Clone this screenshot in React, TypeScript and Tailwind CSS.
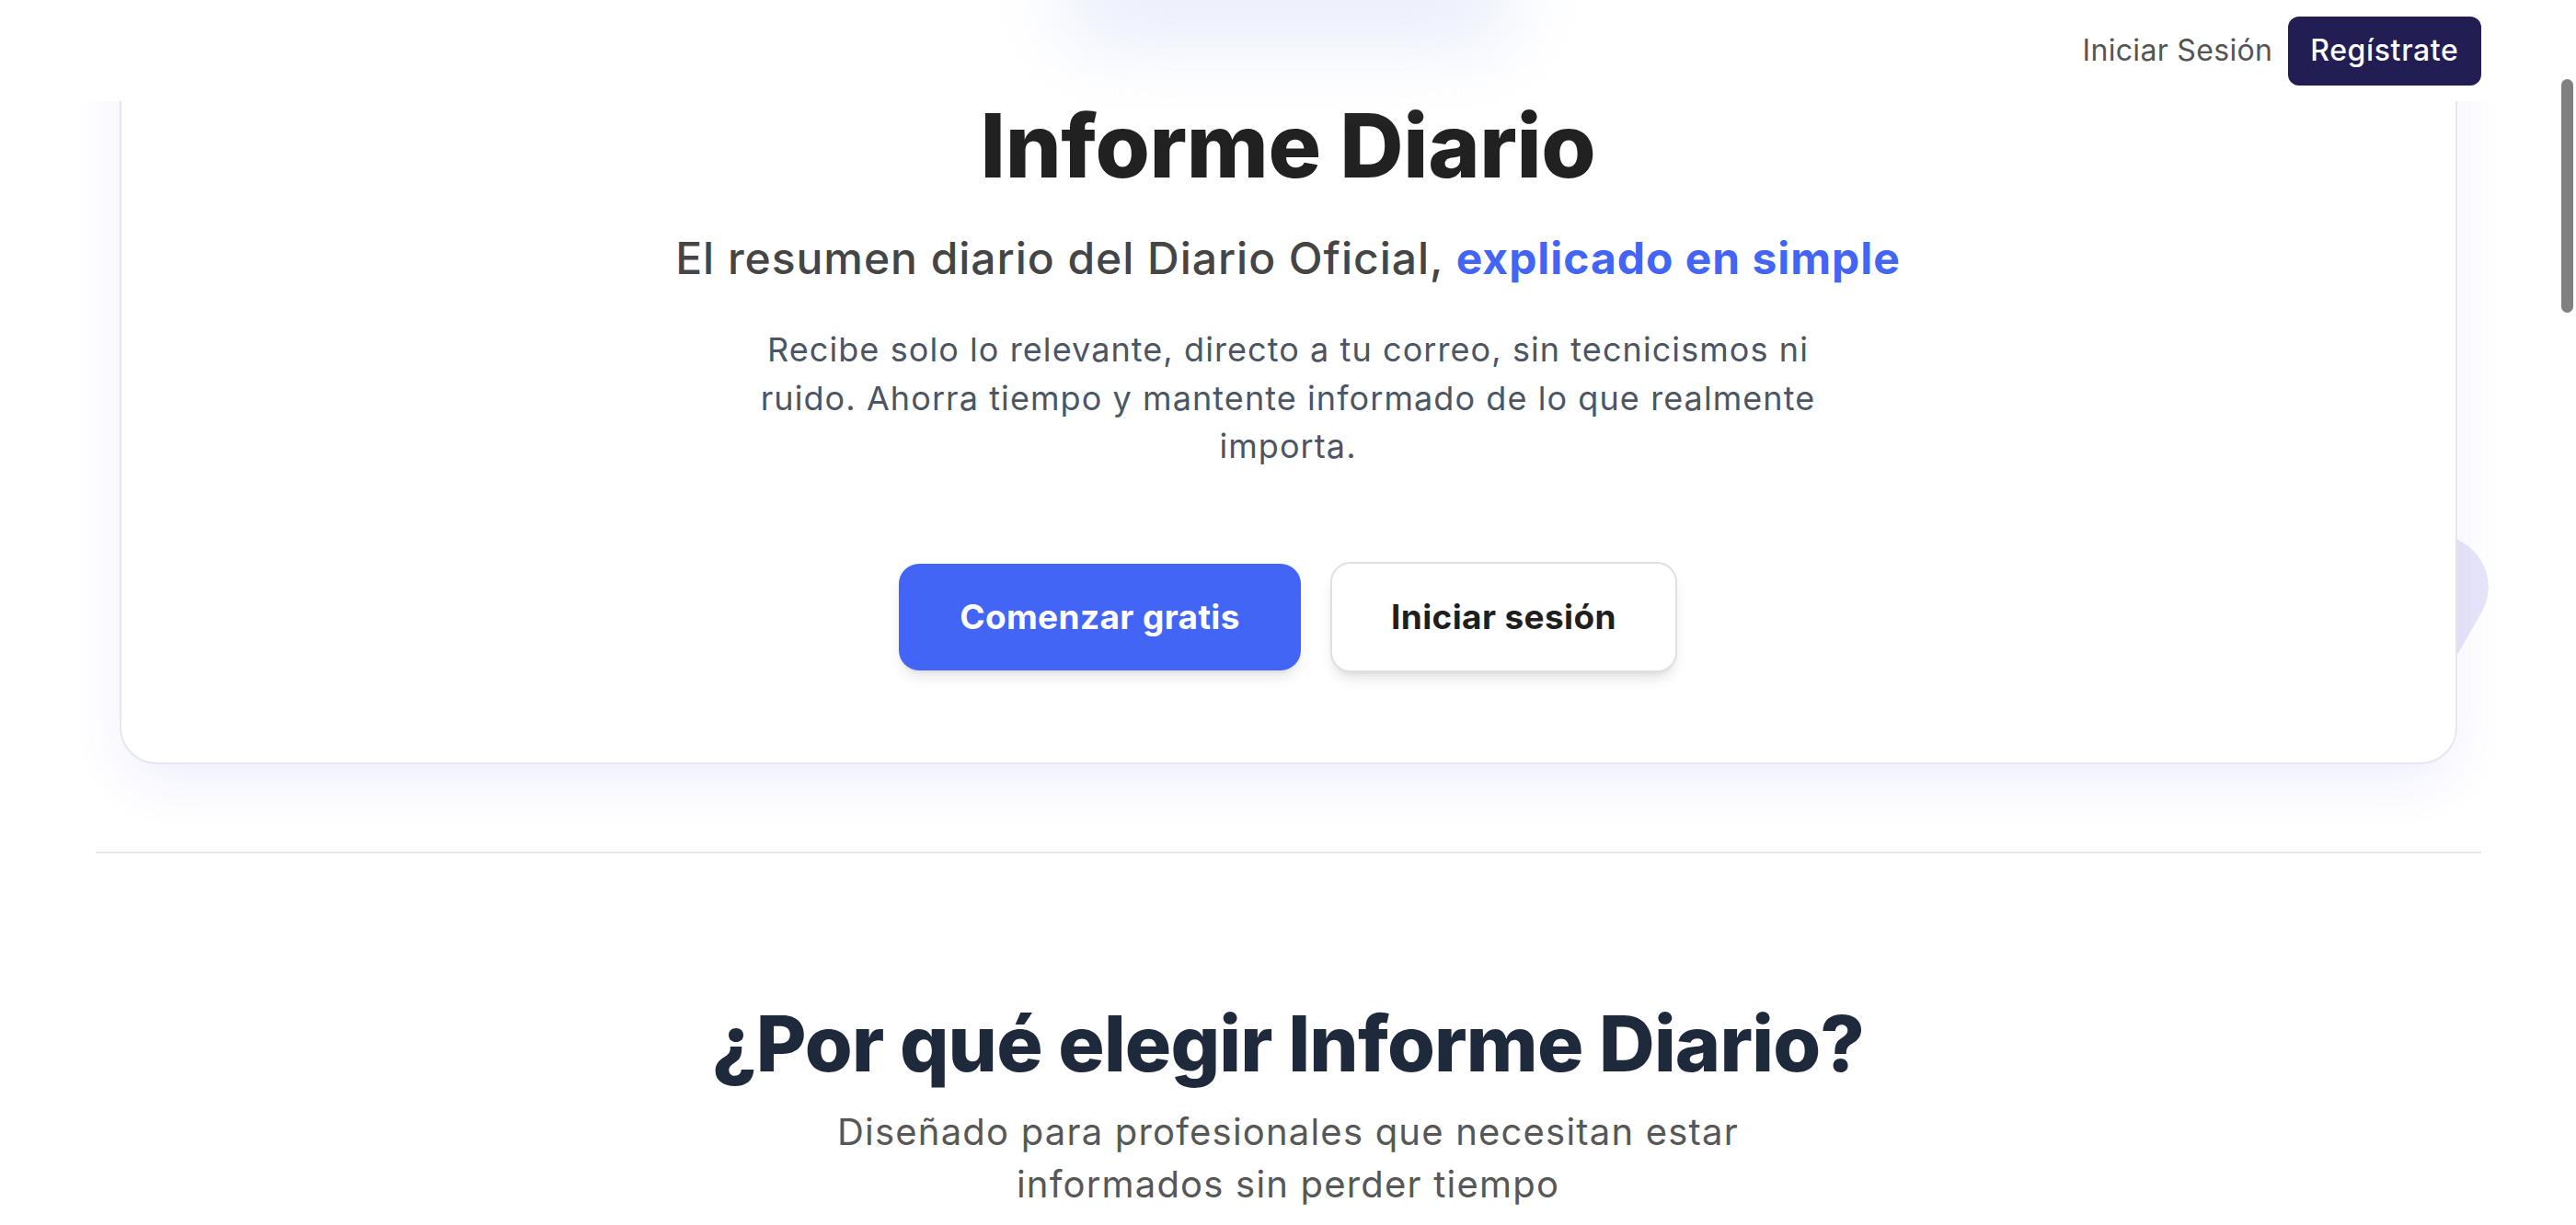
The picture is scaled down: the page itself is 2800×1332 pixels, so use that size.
const App = () => {
  return (
    <div className="relative h-[1332px] w-full overflow-hidden bg-white font-['Inter',_sans-serif]">
      {/* top header */}
      <header className="absolute inset-x-0 top-0 z-20 h-[110px] bg-white">
        <div className="mx-auto flex h-full w-[2593px] items-center justify-end gap-[17px]">
          <a className="text-[32px] tracking-[0.01em] text-[#555555]">Iniciar Sesión</a>
          <button className="h-[75px] rounded-[12px] bg-[#221e54] px-[24px] text-[32px] font-medium tracking-[0.02em] text-white">
            Regístrate
          </button>
        </div>
      </header>
      <div className="pointer-events-none absolute left-1/2 top-[-50px] z-30 h-[100px] w-[500px] -translate-x-1/2 rounded-full bg-[#eaeefb] blur-2xl" />

      <main className="mx-auto w-[2593px]">
        <section className="relative px-[26px]">
          <div className="absolute right-[4px] top-[562px] h-[176px] w-[176px] rotate-[30deg] rounded-[56px] bg-[#e6e5f8]" />
          <div className="relative flex flex-col items-center rounded-[40px] border-2 border-[#e6e6ee] bg-white pt-[108px] pb-[98px] shadow-[0_24px_60px_-10px_rgba(99,102,241,0.12)]">
            <h1 className="text-[96px] font-extrabold leading-none tracking-[-0.004em] text-[#212121]">
              Informe Diario
            </h1>
            <p className="mt-[47px] text-[48px] font-medium leading-[56px] tracking-[0.02em] text-[#454545]">
              El resumen diario del Diario Oficial,{' '}
              <span className="font-bold text-[#4365f6]">explicado en simple</span>
            </p>
            <p className="mt-[45px] text-center text-[36px] leading-[52.5px] tracking-[0.03em] text-[#4b5563]">
              Recibe solo lo relevante, directo a tu correo, sin tecnicismos ni
              <br />
              ruido. Ahorra tiempo y mantente informado de lo que realmente
              <br />
              importa.
            </p>
            <div className="mt-[99px] flex items-center gap-[32px]">
              <button className="h-[116px] w-[437px] rounded-[22px] bg-[#4365f6] text-[37px] font-bold tracking-[0.01em] text-white shadow-lg">
                Comenzar gratis
              </button>
              <button className="h-[120px] w-[377px] rounded-[22px] border-2 border-[#e0e0e0] bg-white text-[37px] font-bold tracking-[0.01em] text-[#1f1f1f] shadow-lg">
                Iniciar sesión
              </button>
            </div>
          </div>
        </section>

        <div className="mt-[95px] h-[2px] bg-[#e5e7eb]" />

        <section className="flex flex-col items-center pt-[165px]">
          <h2 className="text-[84px] font-extrabold leading-none tracking-[-0.01em] text-[#1e293b]">
            ¿Por qué elegir Informe Diario?
          </h2>
          <p className="mt-[25px] text-center text-[40px] leading-[57px] tracking-[0.03em] text-[#575757]">
            Diseñado para profesionales que necesitan estar
            <br />
            informados sin perder tiempo
          </p>
        </section>
      </main>

      {/* overlay scrollbar */}
      <div className="absolute right-[3px] top-[86px] z-40 h-[254px] w-[13px] rounded-full bg-[#808080]" />
    </div>
  );
};

export default App;
